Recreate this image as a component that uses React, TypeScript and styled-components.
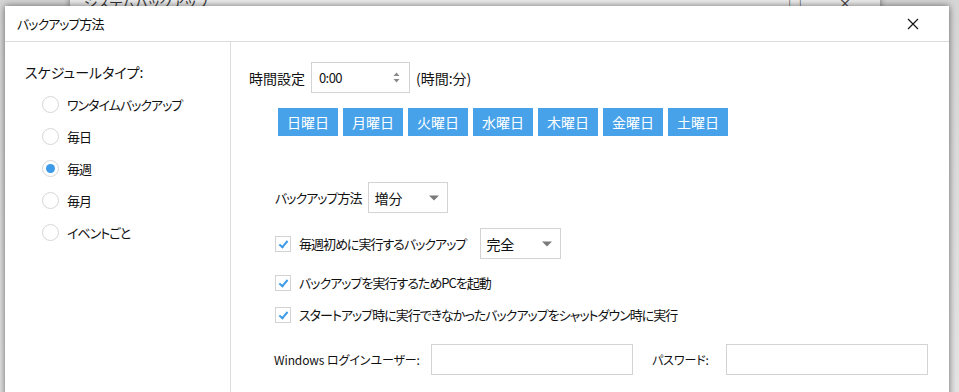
import React, { useState } from 'react';
import styled, { createGlobalStyle } from 'styled-components';

const GlobalStyle = createGlobalStyle`
  html, body {
    margin: 0;
    padding: 0;
    background: #dedede;
  }
  body {
    font-family: "Noto Sans CJK JP", "Noto Sans", sans-serif;
    font-feature-settings: "palt";
    color: #111;
  }
`;

const days = ['日曜日', '月曜日', '火曜日', '水曜日', '木曜日', '金曜日', '土曜日'];
const scheduleTypes = ['ワンタイムバックアップ', '毎日', '毎週', '毎月', 'イベントごと'];

const App: React.FC = () => {
  const [schedule, setSchedule] = useState<string>('毎週');
  const [checks, setChecks] = useState<boolean[]>([true, true, true]);

  const toggle = (i: number) => {
    setChecks(checks.map((c, k) => (k === i ? !c : c)));
  };

  return (
    <Desktop>
      <GlobalStyle />
      <BackWindow>
        <BackTitle>システムバックアップ</BackTitle>
        <BackControls>
          <span>□</span>
          <span>×</span>
        </BackControls>
      </BackWindow>

      <Dialog>
        <TitleBar>
          <Title>バックアップ方法</Title>
          <CloseButton aria-label="close">
            <svg width="12" height="12" viewBox="0 0 12 12">
              <path d="M1 1 L11 11 M11 1 L1 11" stroke="#111" strokeWidth="1.1" fill="none" />
            </svg>
          </CloseButton>
        </TitleBar>

        <Body>
          <LeftPanel>
            <SectionLabel>スケジュールタイプ:</SectionLabel>
            <RadioList>
              {scheduleTypes.map((t) => (
                <RadioRow key={t} onClick={() => setSchedule(t)}>
                  <RadioCircle $checked={schedule === t} />
                  <span>{t}</span>
                </RadioRow>
              ))}
            </RadioList>
          </LeftPanel>

          <RightPanel>
            <TimeRow>
              <FieldLabel>時間設定</FieldLabel>
              <TimeBox>
                <span>0:00</span>
                <Spinner>
                  <svg width="7" height="11" viewBox="0 0 7 11">
                    <path d="M3.5 0.5 L6.5 4 L0.5 4 Z" fill="#8a8a8a" />
                    <path d="M3.5 10.5 L6.5 7 L0.5 7 Z" fill="#8a8a8a" />
                  </svg>
                </Spinner>
              </TimeBox>
              <FieldLabel>(時間:分)</FieldLabel>
            </TimeRow>

            <DayRow>
              {days.map((d) => (
                <DayButton key={d}>{d}</DayButton>
              ))}
            </DayRow>

            <MethodRow>
              <MethodLabel>バックアップ方法</MethodLabel>
              <Select $width={80}>
                <span>増分</span>
                <Caret />
              </Select>
            </MethodRow>

            <CheckList>
              <CheckRow>
                <CheckBox $checked={checks[0]} onClick={() => toggle(0)} />
                <CheckText $gap={14}>毎週初めに実行するバックアップ</CheckText>
                <Select $width={81}>
                  <span>完全</span>
                  <Caret />
                </Select>
              </CheckRow>
              <CheckRow>
                <CheckBox $checked={checks[1]} onClick={() => toggle(1)} />
                <CheckText>バックアップを実行するためPCを起動</CheckText>
              </CheckRow>
              <CheckRow>
                <CheckBox $checked={checks[2]} onClick={() => toggle(2)} />
                <CheckText>スタートアップ時に実行できなかったバックアップをシャットダウン時に実行</CheckText>
              </CheckRow>
            </CheckList>

            <LoginRow>
              <LoginLabel $width={157}>Windows ログインユーザー:</LoginLabel>
              <TextInput />
              <LoginLabel $width={74} $indent={19}>パスワード:</LoginLabel>
              <TextInput />
            </LoginRow>
          </RightPanel>
        </Body>
      </Dialog>
    </Desktop>
  );
};

const Caret: React.FC = () => (
  <svg width="10" height="6" viewBox="0 0 10 6">
    <path d="M0 0.5 L10 0.5 L5 5.5 Z" fill="#7a7a7a" />
  </svg>
);

const Desktop = styled.div`
  position: relative;
  width: 959px;
  height: 392px;
  overflow: hidden;
  background: linear-gradient(#d6d6d6, #e4e4e4);
`;

const BackWindow = styled.div`
  position: absolute;
  left: 70px;
  top: -24px;
  width: 810px;
  height: 40px;
  background: #ededed;
  box-shadow: 0 0 6px rgba(0, 0, 0, 0.45);
`;

const BackTitle = styled.div`
  position: absolute;
  left: 14px;
  top: 16px;
  font-size: 14px;
  color: #333;
`;

const BackControls = styled.div`
  position: absolute;
  right: 28px;
  top: 16px;
  display: flex;
  gap: 36px;
  font-size: 14px;
  color: #333;
`;

const Dialog = styled.div`
  position: absolute;
  left: 5px;
  top: 6px;
  width: 944px;
  height: 420px;
  background: #fff;
  box-shadow: 0 0 7px rgba(0, 0, 0, 0.55);
  display: flex;
  flex-direction: column;
`;

const TitleBar = styled.div`
  height: 35px;
  display: flex;
  align-items: center;
  justify-content: space-between;
  padding: 0 30px 0 12px;
  border-bottom: 1px solid #dcdcdc;
`;

const Title = styled.div`
  font-size: 13px;
  letter-spacing: -1px;
`;

const CloseButton = styled.div`
  display: flex;
  width: 12px;
  height: 12px;
`;

const Body = styled.div`
  flex: 1;
  display: flex;
`;

const LeftPanel = styled.div`
  width: 226px;
  border-right: 1px solid #dcdcdc;
  padding: 20px 0 0 20px;
  box-sizing: border-box;
`;

const SectionLabel = styled.div`
  font-size: 14px;
  line-height: 20px;
`;

const RadioList = styled.div`
  display: flex;
  flex-direction: column;
  margin-top: 6px;
  padding-left: 17px;
`;

const RadioRow = styled.div`
  height: 32px;
  display: flex;
  align-items: center;
  gap: 8px;
  font-size: 13px;
  letter-spacing: -1px;
  cursor: pointer;
`;

const RadioCircle = styled.span<{ $checked: boolean }>`
  width: 15px;
  height: 15px;
  border-radius: 50%;
  border: 1px solid #d6d6d6;
  background: #fff;
  display: flex;
  align-items: center;
  justify-content: center;
  &::after {
    content: '';
    width: 9px;
    height: 9px;
    border-radius: 50%;
    background: ${(p) => (p.$checked ? '#3d9be9' : 'transparent')};
  }
`;

const RightPanel = styled.div`
  flex: 1;
  padding: 20px 0 0 18px;
`;

const TimeRow = styled.div`
  display: flex;
  align-items: center;
  gap: 6px;
`;

const FieldLabel = styled.span`
  font-size: 14px;
  white-space: nowrap;
`;

const MethodLabel = styled.span`
  font-size: 13px;
  letter-spacing: -1px;
  white-space: nowrap;
`;

const TimeBox = styled.div`
  width: 99px;
  height: 31px;
  box-sizing: border-box;
  border: 1px solid #d3d3d3;
  display: flex;
  align-items: center;
  justify-content: space-between;
  padding: 0 9px 0 7px;
  font-size: 13px;
  letter-spacing: -0.6px;
`;

const Spinner = styled.span`
  display: flex;
`;

const DayRow = styled.div`
  display: flex;
  gap: 5px;
  margin: 15px 0 0 29px;
`;

const DayButton = styled.div`
  width: 60px;
  height: 28px;
  background: #47a2ea;
  color: #fff;
  font-size: 14px;
  display: flex;
  align-items: center;
  justify-content: center;
`;

const MethodRow = styled.div`
  display: flex;
  align-items: center;
  gap: 7px;
  margin: 46px 0 0 26px;
`;

const Select = styled.div<{ $width: number }>`
  width: ${(p) => p.$width}px;
  height: 31px;
  box-sizing: border-box;
  border: 1px solid #d3d3d3;
  display: flex;
  align-items: center;
  justify-content: space-between;
  padding: 0 8px 0 5px;
  font-size: 14px;
`;

const CheckList = styled.div`
  display: flex;
  flex-direction: column;
  gap: 16px;
  margin: 15px 0 0 26px;
`;

const CheckRow = styled.div`
  display: flex;
  align-items: center;
  min-height: 16px;
`;

const CheckBox = styled.span<{ $checked: boolean }>`
  width: 16px;
  height: 16px;
  box-sizing: border-box;
  border: 1px solid #d3d3d3;
  background: #fff;
  margin-right: 8px;
  cursor: pointer;
  position: relative;
  &::after {
    content: '';
    position: absolute;
    left: 5px;
    top: 2px;
    width: 3px;
    height: 7px;
    border: solid #3d9be9;
    border-width: 0 2px 2px 0;
    transform: rotate(40deg);
    display: ${(p) => (p.$checked ? 'block' : 'none')};
  }
`;

const CheckText = styled.span<{ $gap?: number }>`
  font-size: 13px;
  letter-spacing: -1px;
  line-height: 16px;
  margin-right: ${(p) => p.$gap || 0}px;
  white-space: nowrap;
`;

const LoginRow = styled.div`
  display: flex;
  align-items: center;
  margin: 21px 0 0 25px;
`;

const LoginLabel = styled.span<{ $width: number; $indent?: number }>`
  width: ${(p) => p.$width}px;
  margin-left: ${(p) => p.$indent || 0}px;
  font-size: 12px;
  letter-spacing: -0.1px;
  white-space: nowrap;
`;

const TextInput = styled.input`
  width: 202px;
  height: 31px;
  box-sizing: border-box;
  border: 1px solid #d3d3d3;
  outline: none;
  padding: 0 6px;
`;

export default App;
